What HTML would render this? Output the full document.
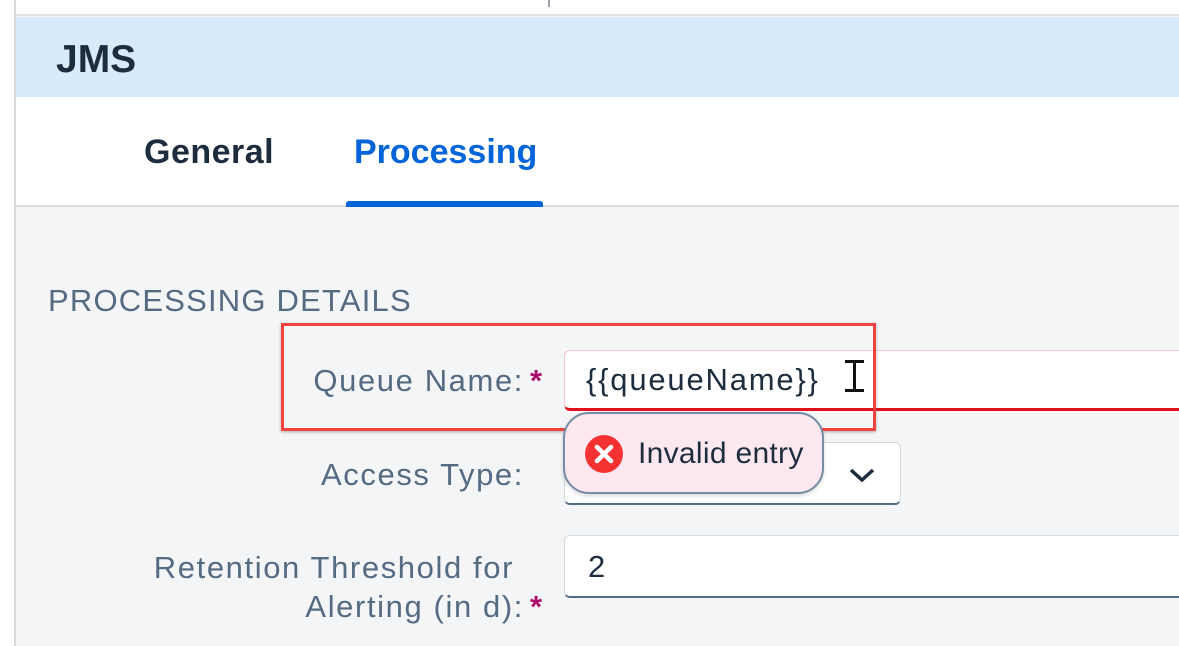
<!DOCTYPE html>
<html><head><meta charset="utf-8"><style>
*{margin:0;padding:0;box-sizing:border-box}
body{width:1179px;height:646px;overflow:hidden;background:#f4f5f7;font-family:"Liberation Sans",sans-serif;position:relative}
.a{position:absolute}
.lbl{color:#556b82;font-size:31px;letter-spacing:1.6px;white-space:nowrap}
.req{color:#aa0d6d;font-weight:bold;letter-spacing:0}
</style></head><body>
<div class="a" style="left:0;top:0;width:14px;height:646px;background:#fff"></div>
<div class="a" style="left:14px;top:0;width:2px;height:646px;background:#d5d8dc"></div>
<div class="a" style="left:16px;top:0;right:0;height:16px;background:#fff;border-bottom:2px solid #dfe1e4"></div>
<div class="a" style="left:548px;top:0;width:2px;height:7px;background:#9aa3ad"></div>
<div class="a" style="left:16px;top:17px;right:0;height:80px;background:#d8ebfc"></div>
<div class="a" style="left:56px;top:38px;font-size:39px;font-weight:bold;color:#1d2d3e">JMS</div>
<div class="a" style="left:16px;top:97px;right:0;height:110px;background:#fff;border-bottom:2px solid #d9dbde"></div>
<div class="a" style="left:144px;top:133px;font-size:34px;font-weight:bold;color:#1d2d3e;letter-spacing:0.5px">General</div>
<div class="a" style="left:354px;top:133px;font-size:34px;font-weight:bold;color:#0064d9">Processing</div>
<div class="a" style="left:346px;top:201px;width:197px;height:6px;background:#0064d9;border-radius:3px 3px 0 0"></div>
<div class="a lbl" style="left:48px;top:283px;font-size:31px;letter-spacing:1.2px">PROCESSING DETAILS</div>

<div class="a lbl" style="right:655px;top:363px">Queue Name:<span class="req" style="position:absolute;left:100%;margin-left:6px">*</span></div>
<div class="a" style="left:564px;top:350px;width:620px;height:61px;background:#fff;border:1px solid #f7c2d3;border-bottom:3px solid #e0121d;border-radius:6px 0 0 6px"></div>
<div class="a" style="left:586px;top:362px;font-size:31px;letter-spacing:1.8px;color:#1d2d3e">{{queueName}}</div>
<div class="a" style="left:853px;top:360px;width:3px;height:32px;background:#111"></div>
<div class="a" style="left:845px;top:360px;width:19px;height:3px;background:#111"></div>
<div class="a" style="left:845px;top:389px;width:19px;height:3px;background:#111"></div>
<div class="a" style="left:281px;top:323px;width:595px;height:108px;border:3px solid #f24141;box-shadow:0 1px 3px rgba(0,0,0,.3)"></div>

<div class="a lbl" style="right:655px;top:457px">Access Type:</div>
<div class="a" style="left:564px;top:442px;width:337px;height:63px;background:#fff;border:1px solid #d5dadd;border-bottom:2px solid #556b82;border-radius:6px"></div>
<svg class="a" style="left:848px;top:466px" width="28" height="18" viewBox="0 0 28 18"><path d="M3 4 L14 14 L25 4" fill="none" stroke="#1d2d3e" stroke-width="3.5"/></svg>
<div class="a" style="left:563px;top:412px;width:261px;height:82px;background:#fde8f0;border:2px solid #758ca4;border-radius:26px;box-shadow:0 2px 4px rgba(0,0,0,.15)"></div>
<svg class="a" style="left:584px;top:434px" width="40" height="40" viewBox="0 0 40 40"><circle cx="20" cy="20" r="19" fill="#f53232"/><path d="M13 13 L27 27 M27 13 L13 27" stroke="#fff" stroke-width="4.5" stroke-linecap="round"/></svg>
<div class="a" style="left:638px;top:437px;font-size:30px;letter-spacing:0.3px;color:#1d2d3e">Invalid entry</div>

<div class="a lbl" style="right:665px;top:550px">Retention Threshold for</div>
<div class="a lbl" style="right:655px;top:589px">Alerting (in d):<span class="req" style="position:absolute;left:100%;margin-left:6px">*</span></div>
<div class="a" style="left:564px;top:535px;width:620px;height:63px;background:#fff;border:1px solid #d5dadd;border-bottom:2px solid #556b82;border-radius:6px 0 0 6px"></div>
<div class="a" style="left:588px;top:549px;font-size:31px;color:#1d2d3e">2</div>
</body></html>
